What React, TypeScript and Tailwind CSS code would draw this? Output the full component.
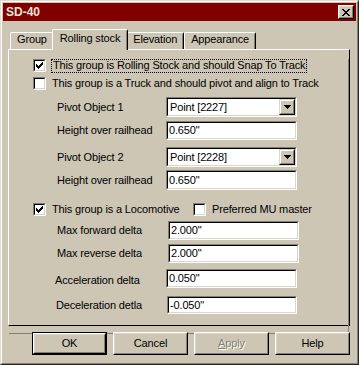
import React from 'react'

function Check({ checked }: { checked?: boolean }) {
  return (
    <div className="w-[13px] h-[13px] shrink-0 border border-t-[#857f72] border-l-[#857f72] border-b-white border-r-white">
      <div className="w-full h-full bg-white border border-t-black border-l-black border-b-[#dcd6c6] border-r-[#dcd6c6] flex items-center justify-center">
        {checked && (
          <svg width="7" height="7" viewBox="0 0 7 7" shapeRendering="crispEdges">
            <path d="M0 2h1v3H0zM1 3h1v3H1zM2 4h1v3H2zM3 3h1v3H3zM4 2h1v3H4zM5 1h1v3H5zM6 0h1v3H6z" fill="#000" />
          </svg>
        )}
      </div>
    </div>
  )
}

function Field({ value, width = 'w-[131px]', h = 'h-[19px]' }: { value: string; width?: string; h?: string }) {
  return (
    <div className={`${width} ${h} border border-t-[#857f72] border-l-[#857f72] border-b-white border-r-white`}>
      <div className="w-full h-full bg-white border border-t-black border-l-black border-b-[#dcd6c6] border-r-[#dcd6c6] flex items-center pl-[1px]">
        {value}
      </div>
    </div>
  )
}

function Select({ value }: { value: string }) {
  return (
    <div className="w-[131px] h-[20px] border border-t-[#857f72] border-l-[#857f72] border-b-white border-r-white">
      <div className="w-full h-full bg-white border border-t-black border-l-black border-b-[#dcd6c6] border-r-[#dcd6c6] flex items-center">
        <span className="flex-1 pl-[2px]">{value}</span>
        <div className="w-[16px] h-[16px] bg-[#cdc6b4] border border-t-[#dcd6c6] border-l-[#dcd6c6] border-b-black border-r-black">
          <div className="w-full h-full border border-t-white border-l-white border-b-[#857f72] border-r-[#857f72] flex items-center justify-center">
            <svg width="7" height="4" viewBox="0 0 7 4" shapeRendering="crispEdges">
              <path d="M0 0h7v1H0zM1 1h5v1H1zM2 2h3v1H2zM3 3h1v1H3z" fill="#000" />
            </svg>
          </div>
        </div>
      </div>
    </div>
  )
}

function Row({ label, children, mt, labelPad = 'pl-[48px]', fieldPad = 'pl-[0px]' }: { label: string; children: React.ReactNode; mt: string; labelPad?: string; fieldPad?: string }) {
  return (
    <div className={`flex items-center ${mt}`}>
      <div className={`w-[157px] ${labelPad}`}>{label}</div>
      <div className={fieldPad}>{children}</div>
    </div>
  )
}

function Button({ label, isDefault, disabled, underline }: { label: string; isDefault?: boolean; disabled?: boolean; underline?: boolean }) {
  return (
    <div className={`w-[75px] h-[23px] ${isDefault ? 'border border-black' : ''}`}>
      <div className="w-full h-full border border-t-white border-l-white border-b-black border-r-black">
        <div className="w-full h-full border border-t-[#dcd6c6] border-l-[#dcd6c6] border-b-[#857f72] border-r-[#857f72] flex items-center justify-center">
          {disabled ? (
            <span className="text-[#857f72] [text-shadow:1px_1px_0_#ffffff]">
              {underline ? <><span className="underline">A</span>{label.slice(1)}</> : label}
            </span>
          ) : (
            <span>{label}</span>
          )}
        </div>
      </div>
    </div>
  )
}

function Tab({ label, selected }: { label: string; selected?: boolean }) {
  if (selected) {
    return (
      <div className="relative z-10 -mx-[2px] -mb-[1px] h-[21px] bg-[#cdc6b4] border-l border-t border-white border-r border-r-black rounded-t-[2px] px-[7px] flex items-start pt-[3px]">
        <div className="absolute right-0 top-[1px] bottom-0 w-px bg-[#857f72]" />
        {label}
      </div>
    )
  }
  return (
    <div className="relative h-[17px] border-l border-t border-white border-r border-r-black rounded-t-[2px] px-[6px] flex items-start pt-[1px]">
      <div className="absolute right-0 top-[1px] bottom-0 w-px bg-[#857f72]" />
      {label}
    </div>
  )
}

export default function App() {
  return (
    <div className="w-[359px] h-[365px] bg-[#cdc6b4] border border-t-[#e2dccd] border-l-[#e2dccd] border-b-[#2a2620] border-r-[#2a2620] font-['Liberation_Sans',Arial,sans-serif] text-[11px] tracking-[-0.15px] text-black leading-none">
      <div className="w-full h-full border border-t-white border-l-white border-b-[#857f72] border-r-[#857f72] p-[1px]">
        {/* Title bar */}
        <div className="h-[18px] bg-[#800000] flex items-center justify-between pl-[3px] pr-[2px]">
          <span className="font-bold text-[#ece4d4] text-[12px] tracking-normal">SD-40</span>
          <div className="w-[16px] h-[14px] bg-[#cdc6b4] border border-t-white border-l-white border-b-black border-r-black">
            <div className="w-full h-full border border-t-[#dcd6c6] border-l-[#dcd6c6] border-b-[#857f72] border-r-[#857f72] flex items-center justify-center">
              <svg width="8" height="7" viewBox="0 0 8 7" shapeRendering="crispEdges">
                <path d="M0 0h2v1H0zM6 0h2v1H6zM1 1h2v1H1zM5 1h2v1H5zM2 2h4v1H2zM3 3h2v1H3zM2 4h4v1H2zM1 5h2v1H1zM5 5h2v1H5zM0 6h2v1H0zM6 6h2v1H6z" fill="#000" />
              </svg>
            </div>
          </div>
        </div>

        <div className="pl-[5px]">
          {/* Tabs */}
          <div className="mt-[9px] h-[19px] flex items-end pl-[2px]">
            <Tab label="Group" />
            <Tab label="Rolling stock" selected />
            <Tab label="Elevation" />
            <Tab label="Appearance" />
          </div>

          {/* Panel */}
          <div className="w-[342px] h-[277px] border border-t-white border-l-white border-b-black border-r-black">
            <div className="w-full h-full border-r border-b border-[#857f72] pl-[24px]">
              <div className="flex items-center gap-[5px] mt-[9px] h-[13px]">
                <Check checked />
                <span className="border border-dotted border-black px-[1px] h-[14px] flex items-center">This group is Rolling Stock and should Snap To Track</span>
              </div>
              <div className="flex items-center gap-[6px] mt-[5px] h-[13px]">
                <Check />
                <span>This group is a Truck and should pivot and align to Track</span>
              </div>

              <div className="-ml-[24px]">
                <Row label="Pivot Object 1" mt="mt-[7px]">
                  <Select value="Point [2227]" />
                </Row>
                <Row label="Height over railhead" mt="mt-[4px]">
                  <Field value={'0.650"'} />
                </Row>
                <Row label="Pivot Object 2" mt="mt-[7px]">
                  <Select value="Point [2228]" />
                </Row>
                <Row label="Height over railhead" mt="mt-[3px]">
                  <Field value={'0.650"'} h="h-[20px]" />
                </Row>
              </div>

              <div className="flex items-center mt-[13px] h-[13px]">
                <Check checked />
                <span className="ml-[6px] w-[141px]">This group is a Locomotive</span>
                <Check />
                <span className="ml-[6px]">Preferred MU master</span>
              </div>

              <div className="-ml-[24px]">
                <Row label="Max forward delta" mt="mt-[5px]" fieldPad="pl-[2px]">
                  <Field value={'2.000"'} />
                </Row>
                <Row label="Max reverse delta" mt="mt-[4px]" fieldPad="pl-[2px]">
                  <Field value={'2.000"'} />
                </Row>
                <Row label="Acceleration delta" mt="mt-[6px]" labelPad="pl-[46px] pt-[3px]">
                  <Field value={'0.050"'} />
                </Row>
                <Row label="Deceleration detla" mt="mt-[8px]" labelPad="pl-[47px]" fieldPad="pl-[1px]">
                  <Field value={'-0.050"'} width="w-[130px]" h="h-[18px]" />
                </Row>
              </div>
            </div>
          </div>

          {/* Buttons */}
          <div className="w-[342px] mt-[6px] flex justify-end gap-[6px]">
            <Button label="OK" isDefault />
            <Button label="Cancel" />
            <Button label="Apply" disabled underline />
            <Button label="Help" />
          </div>
        </div>
      </div>
    </div>
  )
}
